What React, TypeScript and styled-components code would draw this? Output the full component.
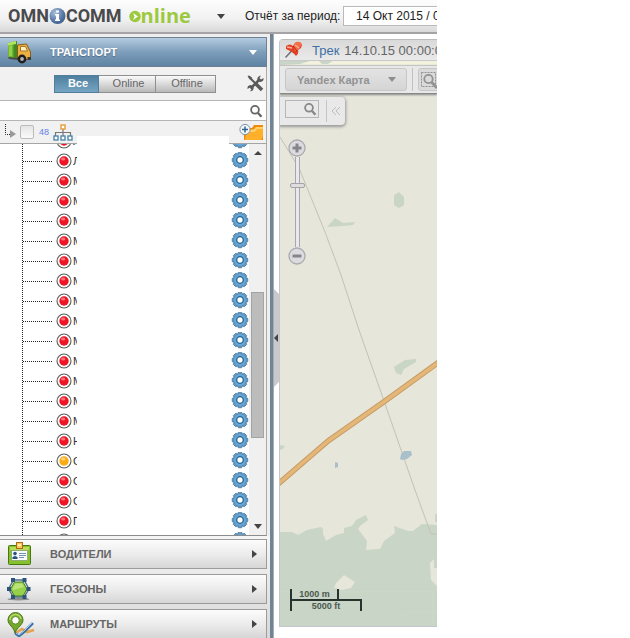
import React from "react";
import styled, { createGlobalStyle } from "styled-components";

const GlobalStyle = createGlobalStyle`
  * { box-sizing: border-box; }
  body { margin: 0; background: #fff; font-family: "Liberation Sans", Arial, sans-serif; font-size: 12px; color: #333; }
  button, input { font: inherit; margin: 0; }
  button { padding: 0; border: 0; background: none; cursor: pointer; }
  svg { display: block; flex: none; }
`;

const Shell = styled.div`
  display: flex;
  flex-direction: column;
  height: 100vh;
  min-height: 400px;
  padding-right: 193px;
  overflow: hidden;
`;

const Header = styled.header`
  display: flex;
  align-items: center;
  flex: none;
  height: 34px;
  padding-left: 8px;
  border-bottom: 2px solid #a5a3a5;
  background: linear-gradient(#fdfdfd, #f1f1f1 60%, #d9d9d9);
  overflow: hidden;
  white-space: nowrap;
`;

const Logo = styled.a`
  display: flex;
  align-items: center;
  flex: none;
  width: 209px;
  height: 32px;
  color: #4a4a4c;
  font: 700 18px/32px Roboto, sans-serif;
  text-decoration: none;
`;

const LogoOnline = styled.span`
  display: flex;
  align-items: center;
  margin-left: 7px;
  color: #9cc93f;
  font: 700 20px/30px "Open Sans", sans-serif;
`;

const MenuButton = styled.button`
  display: flex;
  flex: none;
  width: 28px;
`;

const PeriodLabel = styled.label`
  flex: none;
  width: 98px;
  color: #222;
`;

const PeriodInput = styled.input`
  flex: none;
  width: 160px;
  height: 20px;
  padding: 0 12px;
  border: 1px solid #b9b9b9;
  background: #fff;
  color: #222;
`;

const Body = styled.div`
  display: flex;
  flex: 1;
  min-height: 0;
`;

const Sidebar = styled.aside`
  display: flex;
  flex-direction: column;
  flex: none;
  width: 270px;
  padding: 3px 3px 0 0;
  background: #eeeeee;
  overflow: hidden;
`;

const SectionButton = styled.button<{ $open?: boolean }>`
  display: flex;
  align-items: center;
  flex: none;
  height: 30px;
  padding: 0 9px 0 7px;
  border: 1px solid ${(p) => (p.$open ? "#6d8193" : "#9b9b9b")};
  border-left: 0;
  background: ${(p) =>
    p.$open ? "linear-gradient(#b4cbe0, #7d9ebb 50%, #5f83a3)" : "linear-gradient(#fcfcfc, #ececec 50%, #d6d6d6)"};
  color: ${(p) => (p.$open ? "#fff" : "#666")};
  font-size: 11px;
  font-weight: 700;
  text-align: left;
  text-shadow: ${(p) => (p.$open ? "0 1px 1px #4c6b87" : "none")};
`;

const SectionIcon = styled.span`
  flex: none;
  width: 26px;
`;

const SectionTitle = styled.span`
  flex: 1;
  padding-left: 17px;
`;

const Filters = styled.div`
  display: flex;
  align-items: center;
  flex: none;
  height: 34px;
  padding-left: 54px;
  border-right: 1px solid #aaa;
  border-bottom: 1px solid #b5b5b5;
  background: #f1f1f1;
`;

const FilterButton = styled.button<{ $active?: boolean; $width: number }>`
  width: ${(p) => p.$width}px;
  height: 18px;
  padding-left: 3px;
  border: 1px solid ${(p) => (p.$active ? "#4f7f9d" : "#8f8f8f")};
  & + & { border-left: 0; }
  background: ${(p) => (p.$active ? "linear-gradient(#4d7f9f, #76a5c2)" : "linear-gradient(#fafafa, #b9b9b9)")};
  color: ${(p) => (p.$active ? "#fff" : "#666")};
  font-size: 11px;
  font-weight: ${(p) => (p.$active ? 700 : 400)};
  line-height: 15px;
`;

const ToolsButton = styled.button`
  margin: 0 2px 0 auto;
`;

const SearchRow = styled.label`
  display: flex;
  align-items: center;
  flex: none;
  height: 20px;
  padding-right: 3px;
  border-right: 1px solid #aaa;
  border-bottom: 1px solid #b5b5b5;
  background: #fff;
`;

const SearchInput = styled.input`
  flex: 1;
  min-width: 0;
  height: 18px;
  border: 0;
  outline: 0;
  background: none;
`;

const TreeHeader = styled.div`
  position: relative;
  display: flex;
  align-items: center;
  flex: none;
  height: 23px;
  padding: 0 2px 0 4px;
  border-right: 1px solid #aaa;
  border-bottom: 1px solid #a5a5a5;
  background: #f1f1f1;
`;

const Checkbox = styled.input`
  appearance: none;
  flex: none;
  width: 14px;
  height: 14px;
  margin-left: 3px;
  border: 1px solid #bbb;
  border-radius: 2px;
  background: linear-gradient(#e4e4e4, #fafafa);
`;

const Count = styled.label`
  flex: none;
  width: 11px;
  margin: 0 3px 0 5px;
  color: #5f80e8;
  font-size: 9px;
  line-height: 20px;
`;

const AddGroupButton = styled.button`
  margin-left: auto;
`;

const Mask = styled.div`
  position: absolute;
  left: 77px;
  right: 37px;
  bottom: -1px;
  height: 8px;
  background: #fff;
`;

const TreeBody = styled.div`
  display: flex;
  flex: 1;
  min-height: 0;
  border-right: 1px solid #aaa;
  border-bottom: 1px solid #8c8c8c;
  background: #fff;
  overflow: hidden;
`;

const VehicleList = styled.ul`
  flex: 1;
  min-width: 0;
  height: 420px;
  margin: -13px 0 0 22px;
  padding: 0;
  border-left: 1px dotted #222;
  list-style: none;
`;

const VehicleRow = styled.li`
  display: flex;
  align-items: center;
  height: 20px;
`;

const Branch = styled.span`
  width: 29px;
  margin-right: 4px;
  border-top: 1px dotted #222;
`;

const VehicleName = styled.span`
  width: 4px;
  margin-left: 1px;
  overflow: hidden;
  color: #333;
  font-size: 11px;
  line-height: 18px;
`;

const GearButton = styled.button`
  height: 20px;
  margin-left: auto;
`;

const Scrollbar = styled.div`
  display: flex;
  flex-direction: column;
  align-items: center;
  flex: none;
  width: 17px;
  padding: 7px 0 6px;
  background: #f0f0f0;
`;

const ScrollTrack = styled.div`
  display: grid;
  grid-template-rows: 136fr 146fr 86fr;
  flex: 1;
  width: 13px;
`;

const ScrollThumb = styled.div`
  grid-row: 2;
  border: 1px solid #a4a4a4;
  background: #bcbcbc;
`;

const ClosedSections = styled.div`
  display: flex;
  flex-direction: column;
  flex: none;
  gap: 5px;
  margin: 0 -3px -1px 0;
  padding: 3px 3px 0 0;
  background: linear-gradient(#f5f5f5, #d8d8d8);
`;

const Splitter = styled.div`
  flex: none;
  width: 4px;
  border-right: 1px solid #a3afb9;
  background: #718496;
`;

const Gutter = styled.div`
  flex: none;
  width: 5px;
  padding-top: 255px;
`;

const CollapseButton = styled.button`
  display: flex;
  align-items: center;
  width: 5px;
  height: 98px;
  background: #c9c9cb;
  clip-path: polygon(0 0, 100% 5%, 100% 95%, 0 100%);
`;

const MapPanel = styled.main`
  position: relative;
  display: flex;
  flex-direction: column;
  align-items: flex-start;
  flex: 1;
  min-width: 0;
  margin: 5px 0 11px;
  border: 1px solid #c3c5cf;
  border-width: 0 0 1px 1px;
  background: #e6e6da;
  border-radius: 4px 0 0 0;
  overflow: hidden;
`;

const MapCanvas = styled.svg`
  position: absolute;
  inset: 0;
  width: 100%;
  height: 100%;
`;

const TrackBar = styled.div`
  position: relative;
  display: flex;
  align-items: center;
  align-self: stretch;
  flex: none;
  height: 22px;
  padding-left: 4px;
  border-top: 1px solid #bcbcbc;
  border-bottom: 1px solid #c9c9c9;
  background: linear-gradient(#d9d9d9, #eaeaea);
  color: #666;
  font-size: 13px;
  white-space: nowrap;
  overflow: hidden;
`;

const TrackLink = styled.a`
  margin: 0 5px 0 8px;
  color: #3f6fa5;
  text-decoration: none;
`;

const MapToolbar = styled.div`
  position: relative;
  display: flex;
  align-items: center;
  align-self: stretch;
  flex: none;
  height: 29px;
  margin-top: 4px;
  padding-left: 5px;
  border-top: 1px solid #c4c4c4;
  border-bottom: 1px solid #888;
  background: #e8e8e8;
  box-shadow: 0 1px 2px #888;
  overflow: hidden;
`;

const LayerButton = styled.button`
  display: flex;
  align-items: center;
  justify-content: space-between;
  flex: none;
  width: 122px;
  height: 23px;
  padding: 0 10px 0 11px;
  border: 1px solid #c6c6c6;
  border-radius: 3px;
  background: linear-gradient(#e3e3e3, #d5d5d5);
  color: #929292;
  font-size: 11px;
  font-weight: 700;
`;

const AreaButton = styled.button`
  flex: none;
  width: 30px;
  height: 23px;
  margin-left: 5px;
  padding-left: 1px;
  border: 1px solid #c6c6c6;
  border-radius: 3px;
  background: #dadada;
`;

const ToolDivider = styled.span`
  flex: none;
  width: 1px;
  height: 23px;
  margin-left: 5px;
  background: #c0c0c0;
`;

const MapSearch = styled.div`
  position: relative;
  display: flex;
  align-items: flex-start;
  flex: none;
  width: 65px;
  height: 28px;
  margin-top: 3px;
  padding: 3px 0 0 5px;
  border-radius: 0 4px 4px 0;
  background: #e9e9e9;
  box-shadow: 0 1px 3px 1px #999;
`;

const MapSearchField = styled.label`
  display: flex;
  align-items: center;
  width: 34px;
  height: 18px;
  border: 1px solid #b6b6b6;
`;

const MapSearchInput = styled.input`
  width: 17px;
  height: 14px;
  padding: 0;
  border: 0;
  outline: 0;
  background: none;
`;

const FoldButton = styled.button`
  height: 22px;
  margin-left: 7px;
  padding-left: 4px;
  border-left: 1px solid #c4c4c4;
`;

const ZoomControl = styled.div`
  position: relative;
  display: flex;
  flex-direction: column;
  align-items: center;
  flex: none;
  margin: 14px 0 auto 8px;
`;

const ZoomSlider = styled.input`
  appearance: none;
  writing-mode: vertical-lr;
  direction: rtl;
  width: 15px;
  height: 90px;
  background: none;
  &::-webkit-slider-runnable-track {
    width: 5px;
    height: 90px;
    border: 1px solid #a6a6ad;
    border-width: 0 1px;
    background: #e8e8ee;
  }
  &::-webkit-slider-thumb {
    appearance: none;
    width: 15px;
    height: 5px;
    margin-right: -5px;
    margin-left: -6px;
    border: 1px solid #a2a2a8;
    border-radius: 2px;
    background: #dededf;
  }
`;

const Scale = styled.div`
  position: relative;
  flex: none;
  width: 72px;
  height: 22px;
  margin: 0 0 15px 10px;
  border-left: 2px solid #27332c;
  color: #4b5a50;
  font-size: 9px;
  font-weight: 700;
  line-height: 10px;
`;

const ScaleMetres = styled.div`
  width: 47px;
  height: 10px;
  border-right: 2px solid #27332c;
  text-align: center;
`;

const ScaleFeet = styled.div`
  height: 12px;
  border: solid #27332c;
  border-width: 2px 2px 0 0;
  text-align: center;
`;

const Triangle = ({ dir, color = "#444" }: { dir: "up" | "down" | "left" | "right"; color?: string }) => {
  const shapes = { up: "M0 4L4 0L8 4Z", down: "M0 0L8 0L4 5Z", left: "M4 0V8L0 4Z", right: "M0 0L5 4L0 8Z" };
  const wide = dir === "up" || dir === "down";
  return (
    <svg width={wide ? 8 : 5} height={wide ? 5 : 8} aria-hidden="true">
      <path d={shapes[dir]} fill={color} />
    </svg>
  );
};

const Magnifier = ({ color = "#666" }: { color?: string }) => (
  <svg width="14" height="14" viewBox="0 0 14 14" fill="none" stroke={color} aria-hidden="true">
    <circle cx="6" cy="5.8" r="3.9" strokeWidth="1.8" />
    <path d="M9 9L12.5 12.8" strokeWidth="2.4" />
  </svg>
);

const Gear = () => (
  <svg width="18" height="18" viewBox="-9 -8 18 18" aria-hidden="true">
    <g fill="#5d98c6" stroke="#3f7299" strokeWidth=".7">
      {[0, 45, 90, 135, 180, 225, 270, 315].map((a) => (
        <path key={a} transform={`rotate(${a})`} d="M-2.6-5.2L-1.7-7.8H1.7L2.6-5.2Z" />
      ))}
    </g>
    <circle r="6.1" fill="#6ba6d2" />
    <circle r="3.3" fill="#fff" stroke="#1f6491" strokeWidth="1.3" />
  </svg>
);

const Status = ({ idle }: { idle?: boolean }) => (
  <svg width="16" height="16" viewBox="0 0 16 16" aria-hidden="true">
    <circle cx="8" cy="8" r="7" fill="#fff" stroke="#5c5c5c" strokeWidth="1.1" />
    <circle cx="8" cy="8" r="4.7" fill={idle ? "#fbab12" : "#ee1423"} />
    <ellipse cx="7.2" cy="6" rx="2.2" ry="1.5" fill={idle ? "#fde0a0" : "#ff8c8c"} opacity=".8" />
  </svg>
);

const Truck = () => (
  <svg width="26" height="24" viewBox="0 0 26 24" aria-hidden="true">
    <path d="M1 3L9 1V19L1 17Z" fill="#6fb52f" />
    <path d="M6.5 2L10 1V19L6.5 18Z" fill="#3f8a22" />
    <path d="M1 3L9 1V4L1 5.5Z" fill="#b1e45f" />
    <path d="M2 6L5 5V16L2 16Z" fill="#93d04c" />
    <path d="M10.5 5L19.5 4L22.5 10L23.5 12V18L18 20L10.5 18Z" fill="#ecb042" stroke="#8d5c14" />
    <path d="M13.5 6.5H18.5L20.5 11H13.5Z" fill="#fdf2c0" stroke="#a8752a" />
    <path d="M1 17L11 18V20L2 19Z" fill="#4a4a44" />
    <circle cx="15" cy="19" r="4.4" fill="#1e1e1e" />
    <circle cx="15" cy="19" r="1.9" fill="#b5b5b5" />
    <path d="M20.5 17H24V20H20.5Z" fill="#3a3a3a" />
  </svg>
);

const Badge = () => (
  <svg width="26" height="24" viewBox="0 0 26 24" aria-hidden="true">
    <rect x="1.5" y="3.5" width="22" height="19" rx="1" fill="#86c02c" stroke="#47780e" />
    <path d="M3 5H22V8H3Z" fill="#b8dc55" />
    <rect x="4.5" y="8.5" width="16" height="10" fill="#f7fbff" stroke="#8fae70" />
    <circle cx="8" cy="11.6" r="1.8" fill="#28557f" />
    <path d="M5.5 17V15L8 14L10.5 15V17Z" fill="#28557f" />
    <path d="M12 11.5H19M12 13.5H19M12 15.5H17" stroke="#7391ad" />
    <rect x="9.5" y=".5" width="6" height="6" fill="#ffc45a" stroke="#ad6918" />
    <path d="M11 3H14" stroke="#fff1ad" strokeWidth="2" />
  </svg>
);

const Zone = () => (
  <svg width="26" height="24" viewBox="0 0 26 24" aria-hidden="true">
    <ellipse cx="11.5" cy="22.2" rx="11" ry="1.3" fill="#8d8d8d" />
    <path d="M6.5 3L17 3L22 12L17 20H6.5L1.5 12Z" fill="none" stroke="#4d6f88" strokeWidth="1.4" />
    <path d="M7.5 5H16L20 12L16 19H7.5L3.5 12Z" fill="#98d04a" stroke="#3f7f22" />
    <path d="M8.5 6.5H15L17 10L6 13L5.5 12Z" fill="#cbec8c" opacity=".7" />
    <g fill="#2c5577">
      {[[6, 3], [17.5, 3], [2, 12], [21.5, 12], [6, 20], [17.5, 20]].map(([x, y]) => (
        <rect key={`${x}-${y}`} x={x - 2} y={y - 2} width="4" height="4" />
      ))}
    </g>
  </svg>
);

const Route = () => (
  <svg width="28" height="25" viewBox="0 0 28 25" fill="none" aria-hidden="true">
    <path d="M9 21L15 17L20 20L27 18" stroke="#e4a34e" strokeWidth="2.6" />
    <path d="M8 21L12 24L17 20L26 11" stroke="#396fa3" strokeWidth="2.6" />
    <path d="M9 21L12 23L17 19L26 10" stroke="#a9cdeb" />
    <path d="M8 21C7 15 1 13 1 8A7.5 7.5 0 0 1 16 8C16 13 10 15 8 21Z" fill="#75a92b" stroke="#47761a" />
    <path d="M3 8A5.5 5 0 0 1 14 7" stroke="#b9db66" strokeWidth="1.6" />
    <circle cx="8.5" cy="8.3" r="3.8" fill="#fff" stroke="#638d35" />
  </svg>
);

const Tools = () => (
  <svg width="17" height="17" viewBox="0 0 17 17" aria-hidden="true">
    <g fill="none" stroke="#5a5a5a">
      <path d="M2 2L9 9" strokeWidth="2" />
      <path d="M9 9L15 15" strokeWidth="3.6" />
      <path d="M3.5 13.5L12.5 4.5" strokeWidth="2.6" />
    </g>
    <path d="M.5 1L2 .5L5 2.5L4.5 4L3 4.5Z" fill="#5a5a5a" />
    <path d="M14 .5L12.5 3L14 4.5L16.5 3Q17 6.5 13.5 7Q10.5 6.5 10.3 4Q10.5 1 14 .5Z" fill="#5a5a5a" />
    <path d="M3 16.5L4.5 14L3 12.5L.5 14Q0 10.5 3.5 10Q6.5 10.5 6.7 13Q6.5 16 3 16.5Z" fill="#5a5a5a" />
  </svg>
);

const Hierarchy = () => (
  <svg width="20" height="17" viewBox="0 0 20 17" fill="#fff" aria-hidden="true">
    <path d="M10 5V12M2.5 12V8.5H17.5V12" fill="none" stroke="#777" strokeWidth="1.2" />
    <rect x="8" y="1" width="4" height="4" stroke="#e79b37" strokeWidth="1.4" />
    {[1, 8, 15].map((x) => <rect key={x} x={x} y="12" width="4" height="4" stroke="#4681a8" strokeWidth="1.3" />)}
  </svg>
);

const AddFolder = () => (
  <svg width="25" height="18" viewBox="0 0 25 18" aria-hidden="true">
    <path d="M5 5H13L15 2H24V17H5Z" fill="#f28b0a" />
    <path d="M8 7L15 6.5L17 4H24V13L22 17H6Z" fill="#ffb02a" />
    <path d="M8 7L15 6.5L17 4H24V6H18L16 9H8Z" fill="#ffd06a" />
    <circle cx="6" cy="6.5" r="5.1" fill="#f4f8fc" stroke="#7c92a6" />
    <path d="M3 6.5H9M6 3.5V9.5" stroke="#31658f" strokeWidth="1.5" />
  </svg>
);

const Pin = () => (
  <svg width="20" height="18" viewBox="0 0 20 18" aria-hidden="true">
    <path d="M1.5 16.5L8 9.5" stroke="#68727a" strokeWidth="1.5" />
    <path d="M2 5Q6 2 9 5L11 2Q15-1 18 4L17 7L14 9Q15 13 12 15Q9 11 2 8Z" fill="#df4026" />
    <path d="M9 5L11 2Q15-1 18 3L15 8L11 10Z" fill="#f36d48" />
    <path d="M11 4L15 7M3 6L8 7" stroke="#ffad8c" strokeWidth="1.3" />
    <path d="M9 5L13 10" stroke="#a92315" />
  </svg>
);

const ZoomGlyph = ({ plus }: { plus?: boolean }) => (
  <svg width="18" height="18" viewBox="0 0 18 18" aria-hidden="true">
    <circle cx="9" cy="9" r="8" fill="#dcdce0" stroke="#a9a9af" strokeWidth="1.3" />
    <path d={plus ? "M4.5 9H13.5M9 4.5V13.5" : "M4.5 9H13.5"} stroke="#85858c" strokeWidth="3" />
  </svg>
);

const LogoBall = () => (
  <svg width="17" height="18" viewBox="0 0 17 18" aria-hidden="true">
    <defs>
      <radialGradient id="ball" cx=".35" cy=".3" r=".8">
        <stop offset="0" stopColor="#a9c0dc" />
        <stop offset=".6" stopColor="#5b7ca8" />
        <stop offset="1" stopColor="#365885" />
      </radialGradient>
    </defs>
    <circle cx="8.5" cy="9" r="8" fill="url(#ball)" />
    <path d="M7 3.5H10V5.5H7ZM6 7H10V12.5H11V14H6V12.5H7V8.5H6Z" fill="#fff" />
  </svg>
);

const PlayBall = () => (
  <svg width="12" height="14" viewBox="0 0 12 14" aria-hidden="true">
    <circle cx="6" cy="7.5" r="5.7" fill="#9cc93f" />
    <path d="M4 4L9 7.5L4 11L5.5 7.5Z" fill="#fff" />
  </svg>
);

const MapDrawing = () => (
  <MapCanvas viewBox="280 39 157 587" preserveAspectRatio="xMinYMin slice" aria-hidden="true">
    <path d="M280 60H437V66H280Z" fill="#f2f2df" />
    <g fill="#c9d5c6">
      <path d="M280 60H313L300 64L280 65ZM318 60H334L328 64H322Z" />
      <path d="M327 227L335 218L343 223L355 222L353 225L343 226Z" />
      <path d="M399 192L404 197V205L399 208L394 205V195Z" />
      <path d="M394 367L405 360L416 359V362L404 369L401 375L396 373Z" />
      <path d="M280 445L285 446L283 449L280 450Z" />
      <path d="M280 532H292L298 535L307 530L321 527L323 529V534L326 541L336 535L344 533V528L352 526L356 520L366 515L368 520L360 526L358 529L367 541L366 550L380 549L384 541L395 533L394 526L408 531H413L422 524L437 525V627H280Z" />
      <path d="M437 513L435 515V522H437Z" />
    </g>
    <g fill="#e6e6da">
      <path d="M344 575L355 582L351 588L342 590L334 588L336 583Z" />
      <path d="M434 559L430 563L431 580L437 586V568H434Z" />
    </g>
    <path d="M280 592H433V627M398 617Q415 609 437 612" fill="none" stroke="#cdd8c9" />
    <path d="M280 137L299 168L325 232L341 275L359 330L383 398L415 490L431 534H437" fill="none" stroke="#c2c3b7" />
    <g fill="none" strokeLinejoin="round">
      <path d="M278 484L328 441L385 401L439 362" stroke="#c59a62" strokeWidth="5.5" />
      <path d="M278 484L328 441L385 401L439 362" stroke="#e4b677" strokeWidth="3.6" />
    </g>
    <g fill="#a9bfca">
      <path d="M400 459L401 454L404 451L411 451L412 455L407 459L402 460Z" />
      <path d="M335 462L338 463V467L335 468Z" />
    </g>
  </MapCanvas>
);

const vehicles = "ЛЛМММММММММММММНСССПП".split("");

const sections = [
  { title: "ВОДИТЕЛИ", icon: <Badge /> },
  { title: "ГЕОЗОНЫ", icon: <Zone /> },
  { title: "МАРШРУТЫ", icon: <Route /> },
];

export default function App() {
  return (
    <>
      <GlobalStyle />
      <Shell>
        <Header>
          <Logo href="#" aria-label="Omnicomm online">
            OMN
            <LogoBall />
            COMM
            <LogoOnline>
              <PlayBall />
              nline
            </LogoOnline>
          </Logo>
          <MenuButton aria-label="Меню"><Triangle dir="down" /></MenuButton>
          <PeriodLabel htmlFor="period">Отчёт за период:</PeriodLabel>
          <PeriodInput id="period" defaultValue="14 Окт 2015 / 00:00" />
        </Header>
        <Body>
          <Sidebar>
            <SectionButton $open aria-expanded="true">
              <SectionIcon><Truck /></SectionIcon>
              <SectionTitle>ТРАНСПОРТ</SectionTitle>
              <Triangle dir="down" color="#fff" />
            </SectionButton>
            <Filters>
              <FilterButton $active $width={45}>Все</FilterButton>
              <FilterButton $width={57}>Online</FilterButton>
              <FilterButton $width={60}>Offline</FilterButton>
              <ToolsButton aria-label="Настройки"><Tools /></ToolsButton>
            </Filters>
            <SearchRow>
              <SearchInput aria-label="Поиск" />
              <Magnifier />
            </SearchRow>
            <TreeHeader>
              <svg width="13" height="18" viewBox="0 0 13 18" aria-hidden="true">
                <path d="M1.5 1V11.5H7" fill="none" stroke="#222" strokeDasharray="1 1" />
                <path d="M6 7L12 11L6 15Z" fill="#999" />
              </svg>
              <Checkbox type="checkbox" id="all" />
              <Count htmlFor="all">48</Count>
              <Hierarchy />
              <AddGroupButton aria-label="Добавить группу"><AddFolder /></AddGroupButton>
              <Mask />
            </TreeHeader>
            <TreeBody>
              <VehicleList>
                {vehicles.map((name, i) => (
                  <VehicleRow key={i}>
                    <Branch />
                    <Status idle={i === 16} />
                    <VehicleName>{name}</VehicleName>
                    <GearButton aria-label="Параметры"><Gear /></GearButton>
                  </VehicleRow>
                ))}
              </VehicleList>
              <Scrollbar>
                <Triangle dir="up" />
                <ScrollTrack><ScrollThumb /></ScrollTrack>
                <Triangle dir="down" />
              </Scrollbar>
            </TreeBody>
            <ClosedSections>
              {sections.map((s) => (
                <SectionButton key={s.title} aria-expanded="false">
                  <SectionIcon>{s.icon}</SectionIcon>
                  <SectionTitle>{s.title}</SectionTitle>
                  <Triangle dir="right" />
                </SectionButton>
              ))}
            </ClosedSections>
          </Sidebar>
          <Splitter />
          <Gutter>
            <CollapseButton aria-label="Свернуть панель"><Triangle dir="left" /></CollapseButton>
          </Gutter>
          <MapPanel>
            <MapDrawing />
            <TrackBar>
              <Pin />
              <TrackLink href="#">Трек</TrackLink>
              14.10.15 00:00:00
            </TrackBar>
            <MapToolbar>
              <LayerButton>Yandex Карта<Triangle dir="down" color="#8d8d8d" /></LayerButton>
              <ToolDivider />
              <AreaButton aria-label="Выделить область">
                <svg width="18" height="18" viewBox="0 0 18 18" fill="none" stroke="#929292" aria-hidden="true">
                  <rect x="1.5" y="1.5" width="14" height="14" strokeDasharray="2 1" />
                  <circle cx="8.5" cy="8" r="4.2" strokeWidth="1.8" />
                  <path d="M11.5 11L17 17" strokeWidth="2.8" />
                </svg>
              </AreaButton>
            </MapToolbar>
            <MapSearch>
              <MapSearchField>
                <MapSearchInput aria-label="Поиск на карте" />
                <Magnifier color="#888" />
              </MapSearchField>
              <FoldButton aria-label="Свернуть">
                <svg width="10" height="10" viewBox="0 0 10 10" fill="none" stroke="#bdbdbd" aria-hidden="true">
                  <path d="M5 1L1 5L5 9M9 1L5 5L9 9" />
                </svg>
              </FoldButton>
            </MapSearch>
            <ZoomControl>
              <button aria-label="Приблизить"><ZoomGlyph plus /></button>
              <ZoomSlider type="range" aria-label="Масштаб" min={0} max={100} defaultValue={70} />
              <button aria-label="Отдалить"><ZoomGlyph /></button>
            </ZoomControl>
            <Scale>
              <ScaleMetres>1000 m</ScaleMetres>
              <ScaleFeet>5000 ft</ScaleFeet>
            </Scale>
          </MapPanel>
        </Body>
      </Shell>
    </>
  );
}
